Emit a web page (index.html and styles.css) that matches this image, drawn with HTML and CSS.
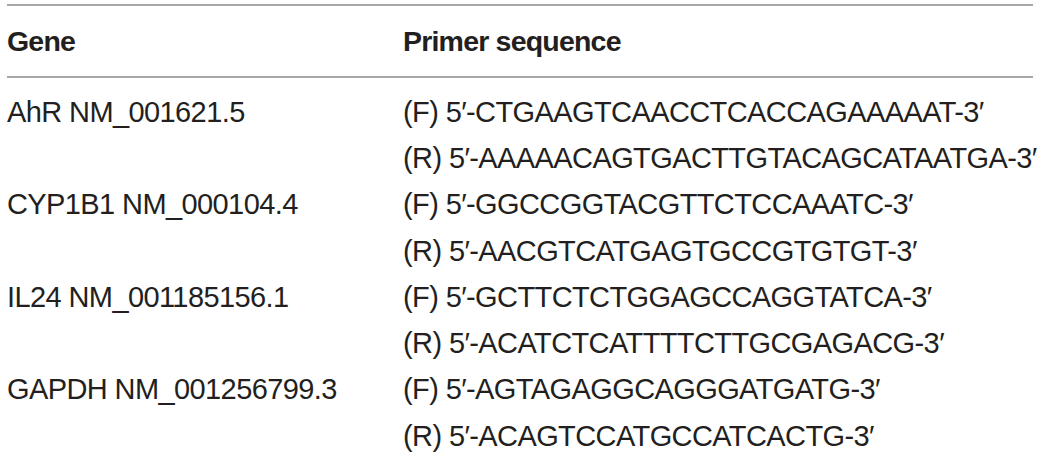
FILE: index.html
```html
<!DOCTYPE html>
<html>
<head>
<meta charset="utf-8">
<link rel="stylesheet" href="styles.css">
</head>
<body>
<div class="table">
  <div class="head">
    <div class="cell gene">Gene</div>
    <div class="cell">Primer sequence</div>
  </div>
  <div class="body">
    <div class="cell gene">AhR NM_001621.5</div>
    <div class="cell">(F) 5′-CTGAAGTCAACCTCACCAGAAAAAT-3′</div>
    <div class="cell gene"></div>
    <div class="cell">(R) 5′-AAAAACAGTGACTTGTACAGCATAATGA-3′</div>
    <div class="cell gene">CYP1B1 NM_000104.4</div>
    <div class="cell">(F) 5′-GGCCGGTACGTTCTCCAAATC-3′</div>
    <div class="cell gene"></div>
    <div class="cell">(R) 5′-AACGTCATGAGTGCCGTGTGT-3′</div>
    <div class="cell gene">IL24 NM_001185156.1</div>
    <div class="cell">(F) 5′-GCTTCTCTGGAGCCAGGTATCA-3′</div>
    <div class="cell gene"></div>
    <div class="cell">(R) 5′-ACATCTCATTTTCTTGCGAGACG-3′</div>
    <div class="cell gene">GAPDH NM_001256799.3</div>
    <div class="cell">(F) 5′-AGTAGAGGCAGGGATGATG-3′</div>
    <div class="cell gene"></div>
    <div class="cell">(R) 5′-ACAGTCCATGCCATCACTG-3′</div>
  </div>
</div>
</body>
</html>
```
FILE: styles.css
```css
html, body {
  margin: 0;
  padding: 0;
  background: #ffffff;
}
body {
  font-family: "Liberation Sans", Arial, sans-serif;
  color: #231f20;
}
.table {
  margin: 4px 7px 0 7px;
  border-top: 2px solid #a8a8a8;
}
.head {
  display: grid;
  grid-template-columns: 396px 1fr;
  height: 70px;
  align-items: center;
  border-bottom: 2px solid #a8a8a8;
  font-weight: bold;
  font-size: 28.5px;
  letter-spacing: -0.8px;
}
.body {
  display: grid;
  grid-template-columns: 396px 1fr;
  grid-auto-rows: 46.3px;
  align-items: center;
  padding-top: 11px;
  font-size: 29px;
  letter-spacing: -0.6px;
}
.cell {
  white-space: nowrap;
}
```
